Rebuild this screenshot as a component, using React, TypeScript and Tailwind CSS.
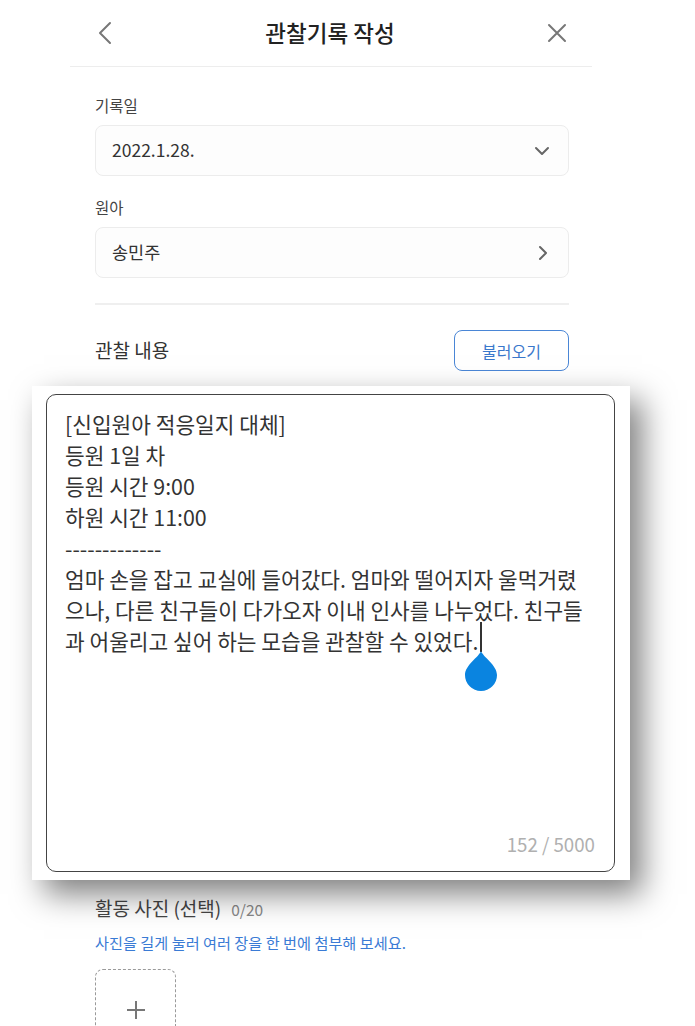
const FONT = { fontFamily: '"Noto Sans CJK KR", "Noto Sans", sans-serif' };

const lines = [
  '[신입원아 적응일지 대체]',
  '등원 1일 차',
  '등원 시간 9:00',
  '하원 시간 11:00',
  '-------------',
  '엄마 손을 잡고 교실에 들어갔다. 엄마와 떨어지자 울먹거렸',
  '으나, 다른 친구들이 다가오자 이내 인사를 나누었다. 친구들',
  '과 어울리고 싶어 하는 모습을 관찰할 수 있었다.',
];

const ChevronDown = () => (
  <svg width="16" height="10" viewBox="0 0 16 10" fill="none" stroke="#666" strokeWidth="2" strokeLinecap="round" strokeLinejoin="round">
    <path d="M2 2l6 6 6-6" />
  </svg>
);

const ChevronRight = () => (
  <svg width="10" height="16" viewBox="0 0 10 16" fill="none" stroke="#666" strokeWidth="2" strokeLinecap="round" strokeLinejoin="round">
    <path d="M2 2l6 6-6 6" />
  </svg>
);

export default function App() {
  return (
    <div className="relative w-[695px] min-h-[1026px] overflow-hidden bg-white text-[#333]" style={FONT}>
      <div className="ml-[70px] w-[522px]">
        {/* header */}
        <div className="flex h-[67px] items-center justify-between border-b border-[#ededed] pl-[27px] pr-[25px]">
          <svg width="16" height="24" viewBox="0 0 16 24" fill="none" stroke="#777" strokeWidth="2" strokeLinecap="round" strokeLinejoin="round">
            <path d="M13 2L3 12l10 10" />
          </svg>
          <div className="text-[22.5px] font-medium text-[#222]">관찰기록 작성</div>
          <svg width="20" height="20" viewBox="0 0 20 20" fill="none" stroke="#777" strokeWidth="2" strokeLinecap="round">
            <path d="M2 2l16 16M18 2L2 18" />
          </svg>
        </div>

        <div className="pl-[25px] pr-[23px]">
          <div className="pt-[27px] text-[15.5px] leading-[22px] text-[#444]">기록일</div>
          <div className="mt-[9px] flex h-[51px] items-center justify-between rounded-[8px] border border-[#ececec] bg-[#fdfdfd] pl-[16px] pr-[18px]">
            <span className="text-[17.5px] text-[#333]">2022.1.28.</span>
            <ChevronDown />
          </div>

          <div className="mt-[20px] text-[15.5px] leading-[22px] text-[#444]">원아</div>
          <div className="mt-[9px] flex h-[51px] items-center justify-between rounded-[8px] border border-[#ececec] bg-[#fdfdfd] pl-[16px] pr-[20px]">
            <span className="text-[17.5px] text-[#333]">송민주</span>
            <ChevronRight />
          </div>

          <div className="mt-[25px] border-t-2 border-[#efefef]" />

          <div className="mt-[25px] flex items-center justify-between">
            <span className="text-[19px] text-[#333]">관찰 내용</span>
            <button className="h-[41px] w-[115px] rounded-[8px] border border-[#4a86d6] bg-white text-[16px] text-[#3a78cc]">
              불러오기
            </button>
          </div>

          {/* page textarea underneath the popup */}
          <div className="mt-[15px] h-[494px] rounded-[8px] border border-[#ececec]" />

          <div className="mt-[16px] flex items-baseline gap-[10px]">
            <span className="text-[19px] leading-[24px] text-[#444]">활동 사진 (선택)</span>
            <span className="text-[15.5px] text-[#888]">0/20</span>
          </div>
          <div className="mt-[11px] text-[15.2px] leading-[20px] text-[#3a7bd5]">
            사진을 길게 눌러 여러 장을 한 번에 첨부해 보세요.
          </div>
          <div className="mt-[17px] flex h-[81px] w-[81px] items-center justify-center rounded-[8px] border border-dashed border-[#9a9a9a]">
            <svg width="20" height="20" viewBox="0 0 20 20" stroke="#777" strokeWidth="2">
              <path d="M10 1v18M1 10h18" />
            </svg>
          </div>
        </div>
      </div>

      {/* magnified textarea popup */}
      <div className="absolute left-[32px] top-[386px] h-[494px] w-[598px] bg-white pb-[8px] pl-[14px] pr-[15px] pt-[8px] shadow-[12px_14px_30px_rgba(0,0,0,0.5)]">
        <div className="flex h-full flex-col rounded-[10px] border-[1.5px] border-[#444]">
          <div className="flex-1 pl-[18px] pt-[13px] text-[21.4px] leading-[31px] text-[#333]">
            {lines.map((l, i) => (
              <div key={i} className="whitespace-nowrap">{l}</div>
            ))}
          </div>
          <div className="pb-[15px] pr-[19px] text-right text-[18.7px] leading-[24px] text-[#b0b0b0]">152 / 5000</div>
        </div>
        {/* caret with handle */}
        <div className="absolute left-[448px] top-[236px] h-[30px] w-[1.5px] bg-[#333]" />
        <svg className="absolute left-[433px] top-[265px]" width="32" height="40" viewBox="0 0 32 40">
          <path d="M16 0C14 6 0 14 0 24a16 16 0 0 0 32 0C32 14 18 6 16 0Z" fill="#0a84e0" />
        </svg>
      </div>
    </div>
  );
}
